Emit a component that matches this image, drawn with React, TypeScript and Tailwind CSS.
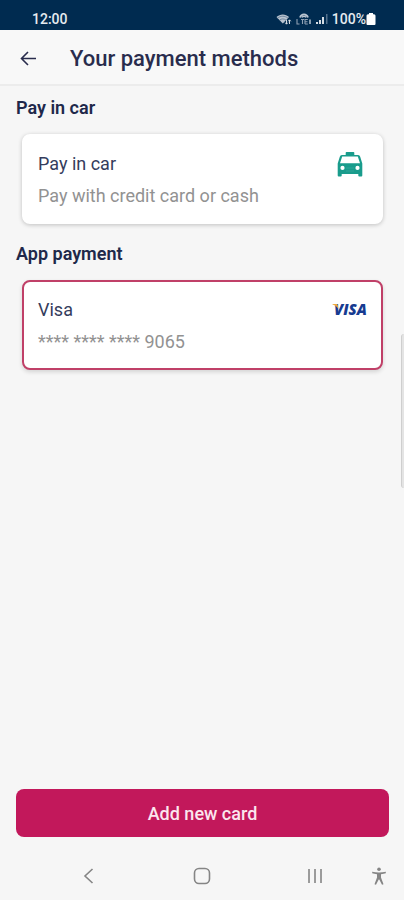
import React from "react";

function WifiIcon() {
  return (
    <svg className="h-3 w-4" viewBox="0 0 16 12" fill="none" aria-hidden="true">
      <path d="M0.500 4C4 0.600 9.500 0.600 13 4L11 6.200 6.800 10.500Z" fill="#b9c4d0" />
      <path d="M1.500 5.200C4.600 2.600 8.900 2.600 12 5.200M3.500 7.200C5.500 5.500 8 5.500 10 7.200" stroke="#4d6a86" strokeWidth="0.700" />
      <path d="M10.500 7v4M9.200 9.700l1.300 1.500 1.300-1.500M13.500 11V7M12.200 8.300L13.500 6.800l1.300 1.500" stroke="#d5dce3" strokeWidth="1" />
    </svg>
  );
}

function NetworkIcon() {
  return (
    <svg className="h-3 w-4" viewBox="0 0 16 12" fill="none" aria-hidden="true">
      <path d="M4 4.500C5.500 0.300 10.500 0.300 12 4.500" stroke="#b9c4d0" strokeWidth="1.800" />
      <path d="M6 4.500c.8-1.800 3.200-1.800 4 0" stroke="#b9c4d0" strokeWidth="1.500" />
      <path d="M1 6v5h2.500M5 6.500h3M6.500 6.500V11M9 11V6.500h2.800M9 8.800h2.500M9 11h2.800" stroke="#8fa0b2" strokeWidth="1.100" />
      <path d="M14 6.500V11" stroke="#d5dce3" strokeWidth="1.300" />
    </svg>
  );
}

function SignalIcon() {
  return (
    <svg className="h-3 w-3" viewBox="0 0 12 12" aria-hidden="true">
      <path d="M0 9h2v2H0zM3 7h2v4H3zM6 4h2v7H6z" fill="#d5dce3" />
      <path d="M10 1h1.500v10H10z" fill="#52708c" />
    </svg>
  );
}

function BatteryIcon() {
  return (
    <svg className="h-3.5 w-2.5" viewBox="0 0 10 14" aria-hidden="true">
      <path d="M3 1h4v1.200h1a1.500 1.500 0 0 1 1.500 1.500V12a1 1 0 0 1-1 1h-7a1 1 0 0 1-1-1V3.700A1.500 1.500 0 0 1 2 2.200h1z" fill="#ffffff" />
    </svg>
  );
}

function TaxiIcon() {
  return (
    <svg className="mr-1 h-[26px] w-[26px]" viewBox="0 0 26 26" aria-hidden="true">
      <path
        fill="#199c8c"
        fillRule="evenodd"
        d="M9.500 1h7a.8.8 0 0 1 .8.8V4h3.700a2.200 2.200 0 0 1 2.200 1.700L25.300 12.500V24.500a1 1 0 0 1-1 1h-2a1 1 0 0 1-1-1V23H4.700v1.500a1 1 0 0 1-1 1h-2a1 1 0 0 1-1-1V12.500L2.800 5.700A2.200 2.200 0 0 1 5 4h3.700V1.800a.8.8 0 0 1 .8-.8zM5.200 5.500L3 12.200h20L20.800 5.500zM5.500 14.800a2.100 2.100 0 1 0 0 4.200 2.100 2.100 0 0 0 0-4.200zM20.500 14.800a2.100 2.100 0 1 0 0 4.200 2.100 2.100 0 0 0 0-4.200z"
      />
      <path d="M9 17h8M9 20h8" stroke="#3aab9d" strokeWidth="0.700" />
    </svg>
  );
}

function VisaLogo() {
  return (
    <svg className="-mr-1 h-6 w-10" viewBox="0 0 40 24" role="img" aria-label="Visa">
      <text x="3" y="17" fontFamily="Open Sans, sans-serif" fontSize="15" fontWeight="800" fontStyle="italic" fill="#173b91">
        VISA
      </text>
      <path d="M1.500 6h3.800c.8 0 1.200.4 1.400 1.100l.7 3.900C6.300 8.800 4.200 7 1.500 6.400z" fill="#eda83c" />
    </svg>
  );
}

function PaymentOption({
  title,
  detail,
  icon,
  selected = false,
}: {
  title: string;
  detail: string;
  icon: React.ReactNode;
  selected?: boolean;
}) {
  return (
    <button
      type="button"
      aria-pressed={selected}
      className={`flex w-full items-start justify-between rounded-lg border-2 bg-white pt-3 pr-3.5 pb-2.5 pl-3.5 text-left ${
        selected
          ? "border-[#c04068] shadow-[0_2px_4px_rgba(0,0,0,0.14)]"
          : "border-white shadow-[0_1px_4px_rgba(0,0,0,0.22)]"
      }`}
    >
      <span className="flex flex-col">
        <span className="text-[18px] leading-8 text-[#343c5c]">{title}</span>
        <span className="text-[18px] leading-8 text-[#929292]">{detail}</span>
      </span>
      <span className="flex h-8 items-center">{icon}</span>
    </button>
  );
}

export default function App() {
  return (
    <div className="relative flex min-h-screen flex-col bg-[#f6f6f6] font-['Roboto',sans-serif]">
      <div className="flex h-[30px] items-end justify-between bg-[#002b50] pr-7 pb-0.5 pl-8 text-[14px] leading-[18px] font-medium text-[#e6ebf0]">
        <span>12:00</span>
        <div className="flex items-center gap-1">
          <WifiIcon />
          <NetworkIcon />
          <SignalIcon />
          <span className="flex items-center">
            100%
            <BatteryIcon />
          </span>
        </div>
      </div>

      <header className="flex h-14 items-center gap-8 border-b-2 border-[#ececec] bg-[#f8f8f8] pt-1 pl-[18px]">
        <button type="button" aria-label="Back" className="flex">
          <svg className="h-5 w-5" viewBox="0 0 20 20" fill="none" stroke="#292c4d" strokeWidth="1.600" aria-hidden="true">
            <path d="M18 9.500H3.500M10 3L3.500 9.500l6.500 6.500" />
          </svg>
        </button>
        <h1 className="text-[22px] leading-7 font-medium text-[#292c4d]">Your payment methods</h1>
      </header>

      <main className="flex flex-1 flex-col pr-[15px] pl-4">
        <section>
          <h2 className="pt-2.5 text-[18px] leading-6 font-semibold text-[#20284a]">Pay in car</h2>
          <div className="px-1.5 pt-3.5">
            <PaymentOption title="Pay in car" detail="Pay with credit card or cash" icon={<TaxiIcon />} />
          </div>
        </section>
        <section className="pt-2">
          <h2 className="pt-2.5 text-[18px] leading-6 font-semibold text-[#20284a]">App payment</h2>
          <div className="px-1.5 pt-3.5">
            <PaymentOption title="Visa" detail="**** **** **** 9065" icon={<VisaLogo />} selected />
          </div>
        </section>
        <button type="button" className="mt-auto h-12 w-full rounded-lg bg-[#c2185b] text-[18px] font-medium text-[#fbe6ee]">
          Add new card
        </button>
      </main>

      <nav aria-label="System navigation" className="flex h-[63px] items-center pt-3.5 text-[#858585]">
        <div className="w-8" />
        <div className="grid flex-1 grid-cols-3 justify-items-center">
          <button type="button" aria-label="Go back" className="flex">
            <svg className="h-5 w-5" viewBox="0 0 20 20" fill="none" stroke="currentColor" strokeWidth="1.600" aria-hidden="true">
              <path d="M13.500 3L6 10l7.500 7" />
            </svg>
          </button>
          <button type="button" aria-label="Home" className="flex">
            <svg className="h-5 w-5" viewBox="0 0 20 20" fill="none" stroke="currentColor" strokeWidth="1.600" aria-hidden="true">
              <rect x="2.500" y="2.500" width="15" height="15" rx="4.500" />
            </svg>
          </button>
          <button type="button" aria-label="Recent apps" className="flex">
            <svg className="h-5 w-5" viewBox="0 0 20 20" fill="none" stroke="currentColor" strokeWidth="1.600" aria-hidden="true">
              <path d="M4 3v14M10 3v14M16 3v14" />
            </svg>
          </button>
        </div>
        <button type="button" aria-label="Accessibility" className="flex w-8">
          <svg className="h-[18px] w-3.5" viewBox="1 0 14 18" fill="currentColor" aria-hidden="true">
            <circle cx="8" cy="2.200" r="1.800" />
            <path d="M1.200 4.800Q8 6.400 14.800 4.800v1.500Q12.800 7 10 7.200v3.300l2.500 6.700-1.500.5L8.300 12.500h-.6L5 17.700l-1.500-.5L6 10.500V7.200Q3.200 7 1.200 6.300z" />
          </svg>
        </button>
      </nav>

      <div className="absolute top-[334px] right-0 h-[154px] w-[3px] rounded-l-full border-l border-[#cfcfcf] bg-[#e4e4e4]" />
    </div>
  );
}
